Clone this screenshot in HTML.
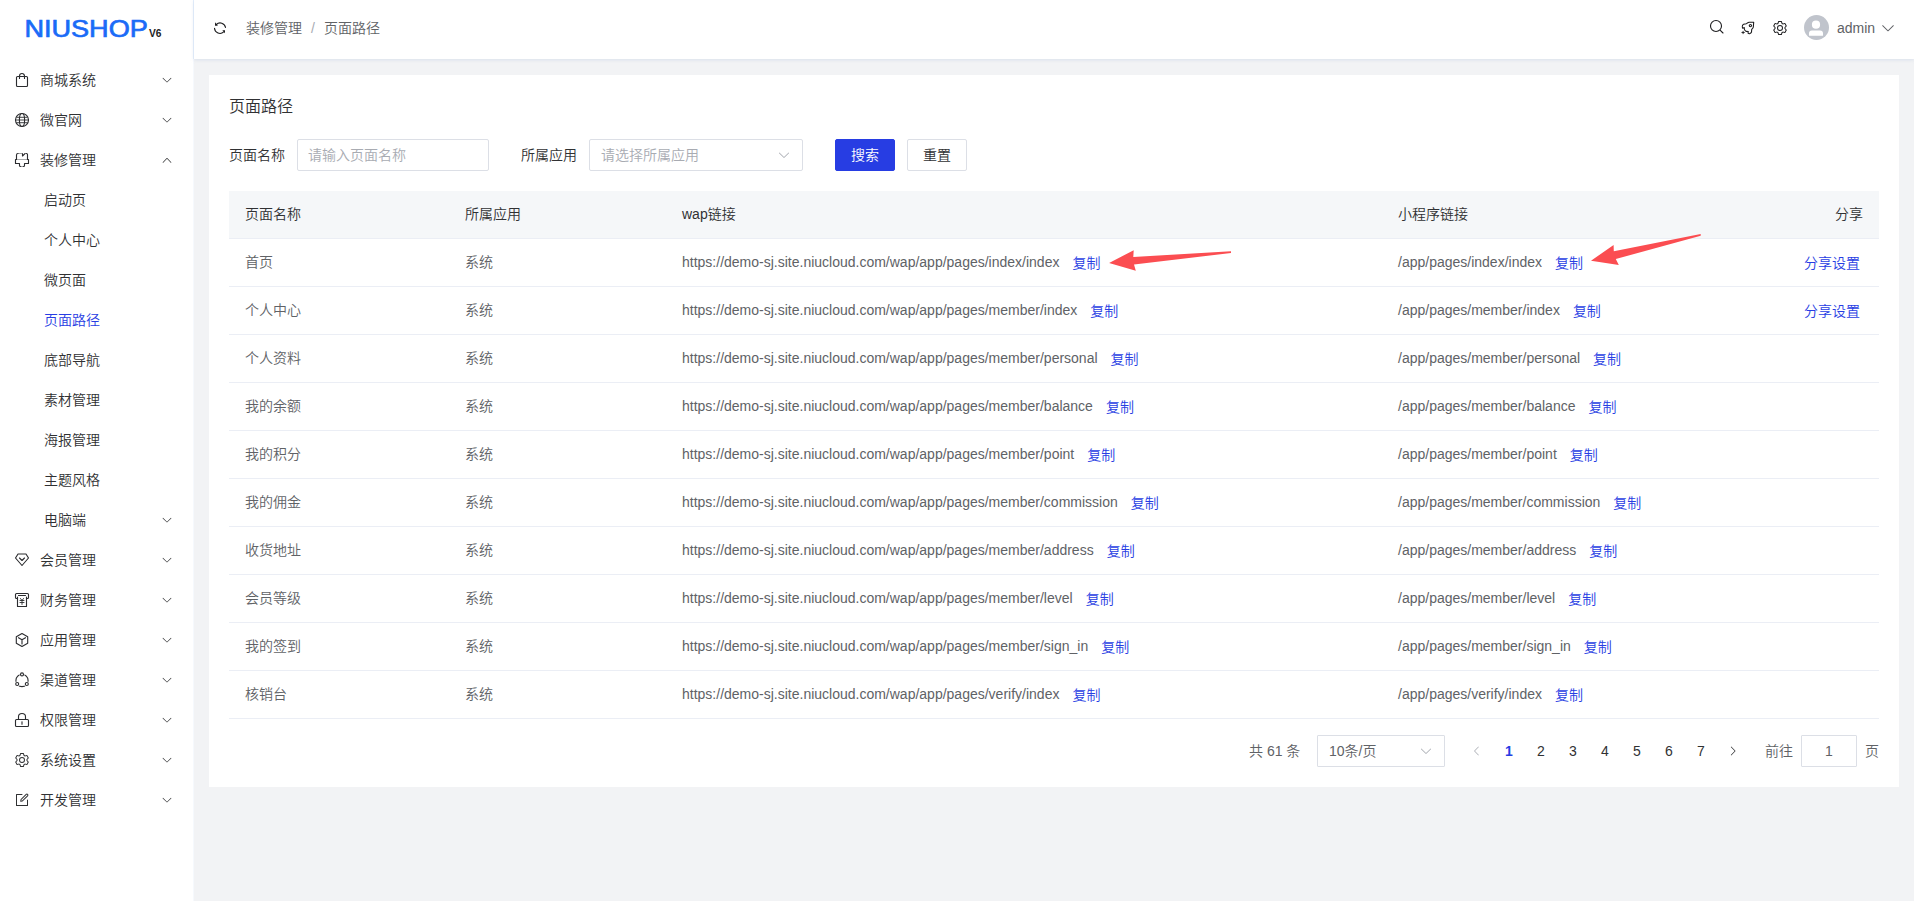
<!DOCTYPE html>
<html lang="zh-CN">
<head>
<meta charset="utf-8">
<title>页面路径</title>
<style>
*{box-sizing:border-box;margin:0;padding:0}
html,body{width:1914px;height:901px;overflow:hidden}
body{font-family:"Liberation Sans","Noto Sans CJK SC",sans-serif;font-size:14px;color:#303133;background:#f2f3f5;position:relative;font-weight:350}
.abs{position:absolute}
/* sidebar */
#side{position:absolute;left:0;top:0;width:194px;height:901px;background:#fff;border-right:1px solid #f6f9fd}
#side:after{content:"";position:absolute;left:193px;top:0;width:1px;height:59px;background:#e4effc}
#logo{position:absolute;left:25px;top:14px}
.mi{position:absolute;left:0;width:193px;height:40px;line-height:40px;font-size:14px;color:#303133;white-space:nowrap}
.mi .ic{position:absolute;left:14px;top:12px;width:16px;height:16px}
.mi .tx{position:absolute;left:40px;top:0}
.mi.sub .tx{left:44px}
.mi .ch{position:absolute;left:161px;top:14px;width:12px;height:12px}
.mi.act{color:#273de3}
svg{display:block;overflow:visible}
/* header */
#head{position:absolute;left:194px;top:0;width:1720px;height:59px;background:#fff;box-shadow:0 1px 3px rgba(195,208,230,.5)}
#bc{position:absolute;left:52px;top:0;line-height:56px;font-size:14px;color:#606266;white-space:nowrap}
#bc .sep{margin:0 9px;color:#a8abb2}
/* card */
#card{position:absolute;left:209px;top:75px;width:1690px;height:712px;background:#fff}
#title{position:absolute;left:20px;top:20px;font-size:16px;line-height:24px;color:#303133}
.lbl{position:absolute;top:64px;line-height:32px;font-size:14px;color:#303133}
.inp{position:absolute;top:64px;height:32px;border:1px solid #dcdfe6;border-radius:2px;background:#fff;line-height:30px;padding-left:10px;font-size:14px;color:#a8abb2;white-space:nowrap}
.btn{position:absolute;top:64px;height:32px;width:60px;border-radius:2px;line-height:30px;text-align:center;font-size:14px}
.btn.pri{background:#273de3;color:#fff;border:1px solid #273de3}
.btn.def{background:#fff;color:#303133;border:1px solid #dcdfe6}
/* table */
#tbl{position:absolute;left:20px;top:116px;width:1650px}
.tr{position:relative;height:48px;border-bottom:1px solid #ebeef5;line-height:47px;font-size:14px;color:#606266;white-space:nowrap}
.tr.th{height:48px;background:#f5f7f9;color:#303133;line-height:46px}
.tr>span{position:absolute;top:0}
.c1{left:16px}.c2{left:236px}.c3{left:453px}.c4{left:1169px}.c5{right:16px}
.lk{color:#273de3;margin-left:13px;position:relative;top:1px}
.c5.lk{margin:0;right:19px;position:absolute;top:1px}
/* pagination */
#pg{position:absolute;left:0;top:660px;width:1690px;height:32px;font-size:14px;color:#606266;line-height:32px}
#pg span{position:absolute;top:0;white-space:nowrap}
#pg .n{width:32px;text-align:center;color:#303133}
</style>
</head>
<body>
<div id="side">
  <svg id="logo" width="150" height="32" viewBox="0 0 150 32"><text x="-0.6" y="22.8" font-family="Liberation Sans, sans-serif" font-size="24" fill="#1a6bf7" stroke="#1a6bf7" stroke-width=".7" textLength="123.4" lengthAdjust="spacingAndGlyphs">NIUSHOP</text><text x="124" y="22.8" font-family="Liberation Sans, sans-serif" font-size="10.5" font-weight="bold" fill="#222" textLength="12.5" lengthAdjust="spacingAndGlyphs">V6</text></svg>
  <div class="mi" style="top:60px"><svg class="ic" viewBox="0 0 16 16" fill="none" stroke="#2b2c2f" stroke-width="1.12" stroke-linecap="round" stroke-linejoin="round"><rect x="2.5" y="4.5" width="11" height="10" rx="1"/><path d="M5.5 6.5V4A2.5 2.5 0 0 1 10.5 4V6.5"/></svg><span class="tx">商城系统</span><svg class="ch" viewBox="0 0 1024 1024" fill="#303133"><path d="M831.872 340.864 512 652.672 192.128 340.864a30.592 30.592 0 0 0-42.752 0 29.12 29.12 0 0 0 0 41.6L489.664 714.24a32 32 0 0 0 44.672 0l340.288-331.712a29.12 29.12 0 0 0 0-41.728 30.592 30.592 0 0 0-42.752 0z"/></svg></div>
  <div class="mi" style="top:100px"><svg class="ic" viewBox="0 0 16 16" fill="none" stroke="#2b2c2f" stroke-width="1.12" stroke-linecap="round" stroke-linejoin="round"><circle cx="8" cy="8" r="6.5"/><ellipse cx="8" cy="8" rx="2.6" ry="6.5"/><path d="M1.5 8H14.5M3 5.3H13M3 10.7H13" stroke-width=".9"/></svg><span class="tx">微官网</span><svg class="ch" viewBox="0 0 1024 1024" fill="#303133"><path d="M831.872 340.864 512 652.672 192.128 340.864a30.592 30.592 0 0 0-42.752 0 29.12 29.12 0 0 0 0 41.6L489.664 714.24a32 32 0 0 0 44.672 0l340.288-331.712a29.12 29.12 0 0 0 0-41.728 30.592 30.592 0 0 0-42.752 0z"/></svg></div>
  <div class="mi" style="top:140px"><svg class="ic" viewBox="0 0 16 16" fill="none" stroke="#2b2c2f" stroke-width="1.12" stroke-linecap="round" stroke-linejoin="round"><path d="M2.5 7.5V3A1.5 1.5 0 0 1 4 1.5" /><path d="M4 1.5H8.5" stroke-opacity=".45"/><path d="M8.5 1.800V4L11 1.600"/><path d="M11 1.500H12.500" stroke-opacity=".5"/><path d="M12.500 1.500A1 1 0 0 1 13.500 2.500V7.500"/><path d="M2.500 7.500H13.500" stroke-opacity=".4"/><path d="M2.500 7.500H1.500V11.500H5.500V13.500A1 1 0 0 0 6.500 14.500" /><path d="M6.500 14.500H9.500" stroke-opacity=".5"/><path d="M9.500 14.500A1 1 0 0 0 10.500 13.500V11.500H14.500V7.500H13.500"/></svg><span class="tx">装修管理</span><svg class="ch" viewBox="0 0 1024 1024" fill="#303133"><path d="m488.832 344.32-339.84 356.672a32 32 0 0 0 0 44.16l.384.384a29.44 29.44 0 0 0 42.688 0l320-335.872 319.872 335.872a29.44 29.44 0 0 0 42.688 0l.384-.384a32 32 0 0 0 0-44.16L535.168 344.32a32 32 0 0 0-46.336 0"/></svg></div>
  <div class="mi sub" style="top:180px"><span class="tx">启动页</span></div>
  <div class="mi sub" style="top:220px"><span class="tx">个人中心</span></div>
  <div class="mi sub" style="top:260px"><span class="tx">微页面</span></div>
  <div class="mi sub act" style="top:300px"><span class="tx">页面路径</span></div>
  <div class="mi sub" style="top:340px"><span class="tx">底部导航</span></div>
  <div class="mi sub" style="top:380px"><span class="tx">素材管理</span></div>
  <div class="mi sub" style="top:420px"><span class="tx">海报管理</span></div>
  <div class="mi sub" style="top:460px"><span class="tx">主题风格</span></div>
  <div class="mi sub" style="top:500px"><span class="tx">电脑端</span><svg class="ch" viewBox="0 0 1024 1024" fill="#303133"><path d="M831.872 340.864 512 652.672 192.128 340.864a30.592 30.592 0 0 0-42.752 0 29.12 29.12 0 0 0 0 41.6L489.664 714.24a32 32 0 0 0 44.672 0l340.288-331.712a29.12 29.12 0 0 0 0-41.728 30.592 30.592 0 0 0-42.752 0z"/></svg></div>
  <div class="mi" style="top:540px"><svg class="ic" viewBox="0 0 16 16" fill="none" stroke="#2b2c2f" stroke-width="1.12" stroke-linecap="round" stroke-linejoin="round"><path d="M4 2H12L14.5 6L8 13.5L1.5 6Z"/><path d="M5.5 6L8 8.5L10.5 6"/></svg><span class="tx">会员管理</span><svg class="ch" viewBox="0 0 1024 1024" fill="#303133"><path d="M831.872 340.864 512 652.672 192.128 340.864a30.592 30.592 0 0 0-42.752 0 29.12 29.12 0 0 0 0 41.6L489.664 714.24a32 32 0 0 0 44.672 0l340.288-331.712a29.12 29.12 0 0 0 0-41.728 30.592 30.592 0 0 0-42.752 0z"/></svg></div>
  <div class="mi" style="top:580px"><svg class="ic" viewBox="0 0 16 16" fill="none" stroke="#2b2c2f" stroke-width="1.12" stroke-linecap="round" stroke-linejoin="round"><path d="M3.5 6.5H2.5A1 1 0 0 1 1.5 5.5V2.5A1 1 0 0 1 2.5 1.5H13.5A1 1 0 0 1 14.5 2.5V5.5A1 1 0 0 1 13.5 6.5H12.5"/><path d="M3.5 5V14.5H12.5V5"/><path d="M4.5 3.5H11.5"/><path d="M6.5 6.5L8 8.5L9.5 6.5M6 8.5H10M6 10.5H10M8 8.5V12.5" stroke-width=".9"/></svg><span class="tx">财务管理</span><svg class="ch" viewBox="0 0 1024 1024" fill="#303133"><path d="M831.872 340.864 512 652.672 192.128 340.864a30.592 30.592 0 0 0-42.752 0 29.12 29.12 0 0 0 0 41.6L489.664 714.24a32 32 0 0 0 44.672 0l340.288-331.712a29.12 29.12 0 0 0 0-41.728 30.592 30.592 0 0 0-42.752 0z"/></svg></div>
  <div class="mi" style="top:620px"><svg class="ic" viewBox="0 0 16 16" fill="none" stroke="#2b2c2f" stroke-width="1.12" stroke-linecap="round" stroke-linejoin="round"><path d="M8 1.5L13.7 4.75V11.25L8 14.5L2.3 11.25V4.75Z"/><path d="M4.5 5.7L8 7.7L11.5 5.7M8 7.7V12"/></svg><span class="tx">应用管理</span><svg class="ch" viewBox="0 0 1024 1024" fill="#303133"><path d="M831.872 340.864 512 652.672 192.128 340.864a30.592 30.592 0 0 0-42.752 0 29.12 29.12 0 0 0 0 41.6L489.664 714.24a32 32 0 0 0 44.672 0l340.288-331.712a29.12 29.12 0 0 0 0-41.728 30.592 30.592 0 0 0-42.752 0z"/></svg></div>
  <div class="mi" style="top:660px"><svg class="ic" viewBox="0 0 16 16" fill="none" stroke="#2b2c2f" stroke-width="1.12" stroke-linecap="round" stroke-linejoin="round"><circle cx="8" cy="8.5" r="6.1"/><g stroke="#fff" stroke-width="2.2" fill="#fff"><circle cx="8" cy="2.4" r="1.5"/><circle cx="3.2" cy="12" r="1.5"/><circle cx="12.8" cy="12" r="1.5"/></g><circle cx="8" cy="2.4" r="1.5"/><circle cx="3.2" cy="12" r="1.5"/><circle cx="12.8" cy="12" r="1.5"/></svg><span class="tx">渠道管理</span><svg class="ch" viewBox="0 0 1024 1024" fill="#303133"><path d="M831.872 340.864 512 652.672 192.128 340.864a30.592 30.592 0 0 0-42.752 0 29.12 29.12 0 0 0 0 41.6L489.664 714.24a32 32 0 0 0 44.672 0l340.288-331.712a29.12 29.12 0 0 0 0-41.728 30.592 30.592 0 0 0-42.752 0z"/></svg></div>
  <div class="mi" style="top:700px"><svg class="ic" viewBox="0 0 16 16" fill="none" stroke="#2b2c2f" stroke-width="1.12" stroke-linecap="round" stroke-linejoin="round"><rect x="1.5" y="7.5" width="13" height="7" rx="1"/><path d="M4.5 7.5V4.7A3.5 3.2 0 0 1 11.5 4.7V7.5"/><path d="M8 9.7V12.3"/></svg><span class="tx">权限管理</span><svg class="ch" viewBox="0 0 1024 1024" fill="#303133"><path d="M831.872 340.864 512 652.672 192.128 340.864a30.592 30.592 0 0 0-42.752 0 29.12 29.12 0 0 0 0 41.6L489.664 714.24a32 32 0 0 0 44.672 0l340.288-331.712a29.12 29.12 0 0 0 0-41.728 30.592 30.592 0 0 0-42.752 0z"/></svg></div>
  <div class="mi" style="top:740px"><svg class="ic" viewBox="0 0 1024 1024" fill="#303133"><path d="M600.704 64a32 32 0 0 1 30.464 22.208l35.2 109.376c14.784 7.232 28.928 15.36 42.432 24.512l112.384-24.192a32 32 0 0 1 34.432 15.36L944.32 364.8a32 32 0 0 1-4.032 37.504l-77.12 85.12a357.12 357.12 0 0 1 0 49.024l77.12 85.248a32 32 0 0 1 4.032 37.504l-88.704 153.6a32 32 0 0 1-34.432 15.296L708.8 803.904c-13.44 9.088-27.648 17.28-42.368 24.512l-35.264 109.376A32 32 0 0 1 600.704 960H423.296a32 32 0 0 1-30.464-22.208L357.696 828.48a351.616 351.616 0 0 1-42.56-24.64l-112.32 24.256a32 32 0 0 1-34.432-15.36L79.68 659.2a32 32 0 0 1 4.032-37.504l77.12-85.248a357.12 357.12 0 0 1 0-48.896l-77.12-85.248A32 32 0 0 1 79.68 364.8l88.704-153.6a32 32 0 0 1 34.432-15.296l112.32 24.256c13.568-9.152 27.776-17.408 42.56-24.64l35.2-109.312A32 32 0 0 1 423.232 64H600.64zm-23.424 64H446.72l-36.352 113.088-24.512 11.968a294.113 294.113 0 0 0-34.816 20.096l-22.656 15.36-116.224-25.088-65.28 113.152 79.68 88.192-1.92 27.136a293.12 293.12 0 0 0 0 40.192l1.92 27.136-79.808 88.192 65.344 113.152 116.224-25.024 22.656 15.296a294.113 294.113 0 0 0 34.816 20.096l24.512 11.968L446.72 896h130.688l36.48-113.152 24.448-11.904a288.282 288.282 0 0 0 34.752-20.096l22.592-15.296 116.288 25.024 65.28-113.152-79.744-88.192 1.92-27.136a293.12 293.12 0 0 0 0-40.256l-1.92-27.136 79.808-88.128-65.344-113.152-116.288 24.96-22.592-15.232a287.616 287.616 0 0 0-34.752-20.096l-24.448-11.904L577.344 128zM512 320a192 192 0 1 1 0 384 192 192 0 0 1 0-384m0 64a128 128 0 1 0 0 256 128 128 0 0 0 0-256"/></svg><span class="tx">系统设置</span><svg class="ch" viewBox="0 0 1024 1024" fill="#303133"><path d="M831.872 340.864 512 652.672 192.128 340.864a30.592 30.592 0 0 0-42.752 0 29.12 29.12 0 0 0 0 41.6L489.664 714.24a32 32 0 0 0 44.672 0l340.288-331.712a29.12 29.12 0 0 0 0-41.728 30.592 30.592 0 0 0-42.752 0z"/></svg></div>
  <div class="mi" style="top:780px"><svg class="ic" viewBox="0 0 1024 1024" fill="#303133"><path d="M832 512a32 32 0 1 1 64 0v352a32 32 0 0 1-32 32H160a32 32 0 0 1-32-32V160a32 32 0 0 1 32-32h352a32 32 0 0 1 0 64H192v640h640z"/><path d="m469.952 554.24 52.8-7.552L847.104 222.4a32 32 0 1 0-45.248-45.248L477.44 501.44l-7.552 52.8zm422.4-422.4a96 96 0 0 1 0 135.808l-331.84 331.84a32 32 0 0 1-18.112 9.088L436.8 623.68a32 32 0 0 1-36.224-36.224l15.104-105.6a32 32 0 0 1 9.024-18.112l331.904-331.84a96 96 0 0 1 135.744 0z"/></svg><span class="tx">开发管理</span><svg class="ch" viewBox="0 0 1024 1024" fill="#303133"><path d="M831.872 340.864 512 652.672 192.128 340.864a30.592 30.592 0 0 0-42.752 0 29.12 29.12 0 0 0 0 41.6L489.664 714.24a32 32 0 0 0 44.672 0l340.288-331.712a29.12 29.12 0 0 0 0-41.728 30.592 30.592 0 0 0-42.752 0z"/></svg></div>
</div>
<div id="head">
  <svg class="abs" style="left:18px;top:20px" width="16" height="16" viewBox="0 0 16 16" fill="none" stroke="#1d1d1f" stroke-width="1.1" stroke-linecap="round"><path d="M4.400 4.500A5.400 5.400 0 0 1 13.500 7.400"/><path d="M2.500 8.300A5.400 5.400 0 0 0 11.700 11.800"/><path d="M3 2.300V5.700H5.900Z" fill="#1d1d1f" stroke="none"/><path d="M10.300 10.300H13V13.300Z" fill="#1d1d1f" stroke="none"/></svg>
  <div id="bc">装修管理<span class="sep">/</span>页面路径</div>
  <svg class="abs" style="left:1514px;top:18px" width="18" height="18" viewBox="0 0 18 18" fill="none" stroke="#1d1d1f" stroke-width="1.1" stroke-linecap="round"><circle cx="8" cy="8" r="5.5"/><path d="M12.3 12.3L15 15"/></svg>
  <svg class="abs" style="left:1546px;top:20px" width="16" height="16" viewBox="0 0 16 16" fill="none" stroke="#1d1d1f" stroke-width="1.1" stroke-linecap="round" stroke-linejoin="round"><path d="M13.700 2.300H9C7.800 2.500 7 3.200 6.400 3.700L3.600 4.200C2.600 4.600 2.200 5.800 2.300 6.900L2.700 8.300L4.300 7.600C4.200 8.600 4.300 9.400 4.700 10C5.200 10.800 5.800 11.200 6.300 11.400L8.300 11.500L8 13.200C8.600 13.700 9.400 13.800 10 13.500C10.800 13.100 11.300 12.600 11.500 12L11.700 9.400C12.600 8.600 13.100 7.900 13.300 7.200Z"/><circle cx="10.400" cy="5.600" r="1.150"/><path d="M3.100 11.300V13.700M1.900 12.500H4.300" stroke-width=".9"/></svg>
  <svg class="abs" style="left:1578px;top:20px" width="16" height="16" viewBox="0 0 1024 1024" fill="#1d1d1f"><path d="M600.704 64a32 32 0 0 1 30.464 22.208l35.2 109.376c14.784 7.232 28.928 15.36 42.432 24.512l112.384-24.192a32 32 0 0 1 34.432 15.36L944.32 364.8a32 32 0 0 1-4.032 37.504l-77.12 85.12a357.12 357.12 0 0 1 0 49.024l77.12 85.248a32 32 0 0 1 4.032 37.504l-88.704 153.6a32 32 0 0 1-34.432 15.296L708.8 803.904c-13.44 9.088-27.648 17.28-42.368 24.512l-35.264 109.376A32 32 0 0 1 600.704 960H423.296a32 32 0 0 1-30.464-22.208L357.696 828.48a351.616 351.616 0 0 1-42.56-24.64l-112.32 24.256a32 32 0 0 1-34.432-15.36L79.68 659.2a32 32 0 0 1 4.032-37.504l77.12-85.248a357.12 357.12 0 0 1 0-48.896l-77.12-85.248A32 32 0 0 1 79.68 364.8l88.704-153.6a32 32 0 0 1 34.432-15.296l112.32 24.256c13.568-9.152 27.776-17.408 42.56-24.64l35.2-109.312A32 32 0 0 1 423.232 64H600.64zm-23.424 64H446.72l-36.352 113.088-24.512 11.968a294.113 294.113 0 0 0-34.816 20.096l-22.656 15.36-116.224-25.088-65.28 113.152 79.68 88.192-1.92 27.136a293.12 293.12 0 0 0 0 40.192l1.92 27.136-79.808 88.192 65.344 113.152 116.224-25.024 22.656 15.296a294.113 294.113 0 0 0 34.816 20.096l24.512 11.968L446.72 896h130.688l36.48-113.152 24.448-11.904a288.282 288.282 0 0 0 34.752-20.096l22.592-15.296 116.288 25.024 65.28-113.152-79.744-88.192 1.92-27.136a293.12 293.12 0 0 0 0-40.256l-1.92-27.136 79.808-88.128-65.344-113.152-116.288 24.96-22.592-15.232a287.616 287.616 0 0 0-34.752-20.096l-24.448-11.904L577.344 128zM512 320a192 192 0 1 1 0 384 192 192 0 0 1 0-384m0 64a128 128 0 1 0 0 256 128 128 0 0 0 0-256"/></svg>
  <svg class="abs" style="left:1610px;top:15px" width="25" height="25" viewBox="0 0 25 25"><circle cx="12.5" cy="12.5" r="12.5" fill="#c0c4cc"/><g transform="translate(2.63,3.84) scale(0.0183)"><path fill="#fff" d="M288 320a224 224 0 1 0 448 0 224 224 0 1 0-448 0m544 608H160a32 32 0 0 1-32-32v-96a160 160 0 0 1 160-160h448a160 160 0 0 1 160 160v96a32 32 0 0 1-32 32z"/></g></svg>
  <div class="abs" style="left:1643px;top:0;line-height:56px;font-size:14px;color:#606266">admin</div>
  <svg class="abs" style="left:1686px;top:20px" width="16" height="16" viewBox="0 0 1024 1024" fill="#606266"><path d="M831.872 340.864 512 652.672 192.128 340.864a30.592 30.592 0 0 0-42.752 0 29.12 29.12 0 0 0 0 41.6L489.664 714.24a32 32 0 0 0 44.672 0l340.288-331.712a29.12 29.12 0 0 0 0-41.728 30.592 30.592 0 0 0-42.752 0z"/></svg>
</div>
<div id="card">
  <div id="title">页面路径</div>
  <div class="lbl" style="left:20px">页面名称</div>
  <div class="inp" style="left:88px;width:192px">请输入页面名称</div>
  <div class="lbl" style="left:312px">所属应用</div>
  <div class="inp" style="left:380px;width:214px;padding-left:11px">请选择所属应用</div>
  <svg class="abs" style="left:568px;top:73px" width="14" height="14" viewBox="0 0 1024 1024" fill="#a8abb2"><path d="M831.872 340.864 512 652.672 192.128 340.864a30.592 30.592 0 0 0-42.752 0 29.12 29.12 0 0 0 0 41.6L489.664 714.24a32 32 0 0 0 44.672 0l340.288-331.712a29.12 29.12 0 0 0 0-41.728 30.592 30.592 0 0 0-42.752 0z"/></svg>
  <div class="btn pri" style="left:626px">搜索</div>
  <div class="btn def" style="left:698px">重置</div>
  <div id="tbl">
    <div class="tr th"><span class="c1">页面名称</span><span class="c2">所属应用</span><span class="c3">wap链接</span><span class="c4">小程序链接</span><span class="c5">分享</span></div>
    <div class="tr"><span class="c1">首页</span><span class="c2">系统</span><span class="c3">https://demo-sj.site.niucloud.com/wap/app/pages/index/index<span class="lk">复制</span></span><span class="c4">/app/pages/index/index<span class="lk">复制</span></span><span class="c5 lk">分享设置</span></div>
    <div class="tr"><span class="c1">个人中心</span><span class="c2">系统</span><span class="c3">https://demo-sj.site.niucloud.com/wap/app/pages/member/index<span class="lk">复制</span></span><span class="c4">/app/pages/member/index<span class="lk">复制</span></span><span class="c5 lk">分享设置</span></div>
    <div class="tr"><span class="c1">个人资料</span><span class="c2">系统</span><span class="c3">https://demo-sj.site.niucloud.com/wap/app/pages/member/personal<span class="lk">复制</span></span><span class="c4">/app/pages/member/personal<span class="lk">复制</span></span></div>
    <div class="tr"><span class="c1">我的余额</span><span class="c2">系统</span><span class="c3">https://demo-sj.site.niucloud.com/wap/app/pages/member/balance<span class="lk">复制</span></span><span class="c4">/app/pages/member/balance<span class="lk">复制</span></span></div>
    <div class="tr"><span class="c1">我的积分</span><span class="c2">系统</span><span class="c3">https://demo-sj.site.niucloud.com/wap/app/pages/member/point<span class="lk">复制</span></span><span class="c4">/app/pages/member/point<span class="lk">复制</span></span></div>
    <div class="tr"><span class="c1">我的佣金</span><span class="c2">系统</span><span class="c3">https://demo-sj.site.niucloud.com/wap/app/pages/member/commission<span class="lk">复制</span></span><span class="c4">/app/pages/member/commission<span class="lk">复制</span></span></div>
    <div class="tr"><span class="c1">收货地址</span><span class="c2">系统</span><span class="c3">https://demo-sj.site.niucloud.com/wap/app/pages/member/address<span class="lk">复制</span></span><span class="c4">/app/pages/member/address<span class="lk">复制</span></span></div>
    <div class="tr"><span class="c1">会员等级</span><span class="c2">系统</span><span class="c3">https://demo-sj.site.niucloud.com/wap/app/pages/member/level<span class="lk">复制</span></span><span class="c4">/app/pages/member/level<span class="lk">复制</span></span></div>
    <div class="tr"><span class="c1">我的签到</span><span class="c2">系统</span><span class="c3">https://demo-sj.site.niucloud.com/wap/app/pages/member/sign_in<span class="lk">复制</span></span><span class="c4">/app/pages/member/sign_in<span class="lk">复制</span></span></div>
    <div class="tr"><span class="c1">核销台</span><span class="c2">系统</span><span class="c3">https://demo-sj.site.niucloud.com/wap/app/pages/verify/index<span class="lk">复制</span></span><span class="c4">/app/pages/verify/index<span class="lk">复制</span></span></div>
  </div>
  <div id="pg">
    <span style="left:1040px">共 61 条</span>
    <div class="inp" style="top:0;left:1108px;width:128px;color:#606266;border-radius:1px;padding-left:11px">10条/页</div>
    <svg class="abs" style="left:1210px;top:9px" width="14" height="14" viewBox="0 0 1024 1024" fill="#a8abb2"><path d="M831.872 340.864 512 652.672 192.128 340.864a30.592 30.592 0 0 0-42.752 0 29.12 29.12 0 0 0 0 41.6L489.664 714.24a32 32 0 0 0 44.672 0l340.288-331.712a29.12 29.12 0 0 0 0-41.728 30.592 30.592 0 0 0-42.752 0z"/></svg>
    <svg class="abs" style="left:1262px;top:10px" width="12" height="12" viewBox="0 0 1024 1024" fill="#a8abb2"><path d="M609.408 149.376 277.76 489.6a32 32 0 0 0 0 44.672l331.648 340.352a29.12 29.12 0 0 0 41.728 0 30.592 30.592 0 0 0 0-42.752L339.264 511.936l311.872-319.872a30.592 30.592 0 0 0 0-42.688 29.12 29.12 0 0 0-41.728 0z"/></svg>
    <span class="n" style="left:1284px;color:#273de3;font-weight:bold">1</span>
    <span class="n" style="left:1316px">2</span>
    <span class="n" style="left:1348px">3</span>
    <span class="n" style="left:1380px">4</span>
    <span class="n" style="left:1412px">5</span>
    <span class="n" style="left:1444px">6</span>
    <span class="n" style="left:1476px">7</span>
    <svg class="abs" style="left:1518px;top:10px" width="12" height="12" viewBox="0 0 1024 1024" fill="#303133"><path d="M340.864 149.312a30.592 30.592 0 0 0 0 42.752L652.736 512 340.864 831.872a30.592 30.592 0 0 0 0 42.752 29.12 29.12 0 0 0 41.728 0L714.24 534.336a32 32 0 0 0 0-44.672L382.592 149.376a29.12 29.12 0 0 0-41.728 0z"/></svg>
    <span style="left:1556px">前往</span>
    <div class="inp" style="top:0;left:1592px;width:56px;padding:0;text-align:center;color:#606266;border-radius:1px">1</div>
    <span style="left:1656px">页</span>
  </div>
</div>
<svg class="abs" style="left:0;top:0;pointer-events:none" width="1914" height="901" viewBox="0 0 1914 901"><polygon fill="#fb4d51" points="1109.1,263 1133.7,250.2 1133.3,257 1231,251.2 1231,253 1134,264.5 1135.8,270.7"/><polygon fill="#fb4d51" points="1591,260.8 1613.600,244.900 1613.800,251.300 1700.700,234.100 1700.700,235.800 1615.800,259 1618.800,264.900"/></svg>
</body>
</html>
